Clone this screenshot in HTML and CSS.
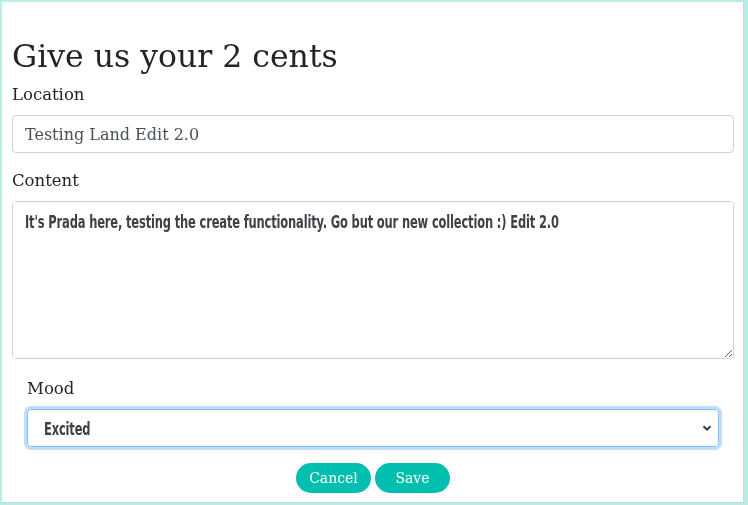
FILE: index.html
```html
<!DOCTYPE html>
<html>
<head>
<meta charset="utf-8">
<link rel="stylesheet" href="styles.css">
</head>
<body>
<div class="card">
  <h1 class="title">Give us your 2 cents</h1>
  <form class="form">
    <div class="group">
      <label class="label">Location</label>
      <input class="control serif" type="text" value="Testing Land Edit 2.0">
    </div>
    <div class="group">
      <label class="label">Content</label>
      <div class="control area" role="textbox" aria-multiline="true"><span class="narrow">It's Prada here, testing the create functionality. Go but our new collection :) Edit 2.0</span></div>
    </div>
    <div class="group inset">
      <label class="label">Mood</label>
      <div class="select focus">
        <span class="narrow sel">Excited</span>
        <svg class="chev" width="10" height="8" viewBox="0 0 10 8"><path d="M1.5 2.2 L5 5.6 L8.5 2.2" fill="none" stroke="#343a40" stroke-width="2"/></svg>
      </div>
    </div>
    <div class="actions">
      <button type="button" class="btn">Cancel</button>
      <button type="button" class="btn">Save</button>
    </div>
  </form>
</div>
</body>
</html>
```
FILE: styles.css
```css
html, body {
  margin: 0;
  padding: 0;
}
body {
  background: #b8ede7;
  width: 748px;
  height: 505px;
  box-sizing: border-box;
  padding: 2px 4px 2px 2px;
  font-family: "DejaVu Serif", "Liberation Serif", serif;
  color: #212529;
}
.card {
  background: #fff;
  height: 100%;
  box-sizing: border-box;
  border-right: 1px solid #cfd4d8;
  border-bottom: 1px solid #cfd4d8;
  padding: 35px 9px 0 10px;
}
.title {
  font-size: 31.5px;
  font-weight: 400;
  line-height: 38px;
  margin: 0 0 8px 0;
}
.form {
  margin: 0;
}
.group {
  margin-bottom: 16px;
}
.inset {
  padding: 0 15px;
  margin-bottom: 16px;
}
.label {
  display: block;
  font-size: 16.5px;
  line-height: 24px;
  margin-bottom: 8px;
}
.inset .label {
  padding-top: 2px;
}
.control {
  display: block;
  width: 100%;
  box-sizing: border-box;
  border: 1px solid #ced4da;
  border-radius: 4px;
  background: #fff;
  color: #495057;
  padding: 6px 12px;
  margin: 0;
}
.serif {
  height: 38px;
  font-family: "DejaVu Serif", "Liberation Serif", serif;
  font-size: 16px;
}
.area {
  margin-top: 2px;
  height: 158px;
  resize: vertical;
  overflow: auto;
  padding-top: 8px;
  line-height: 24px;
}
.narrow {
  display: inline-block;
  font-family: "DejaVu Sans Condensed", "DejaVu Sans", sans-serif;
  font-weight: 700;
  font-size: 17px;
  color: #3d4247;
  white-space: nowrap;
  transform: scaleX(0.75);
  transform-origin: left center;
  letter-spacing: -0.2px;
}
.select {
  height: 38px;
  box-sizing: border-box;
  border: 1px solid #80bdff;
  border-radius: 4px;
  box-shadow: 0 0 0 3px rgba(0, 123, 255, 0.25);
  display: flex;
  align-items: center;
  justify-content: space-between;
  padding: 0 6px 0 16px;
}
.sel {
  padding-top: 2px;
}
.actions {
  display: flex;
  justify-content: center;
  gap: 4px;
}
.btn {
  width: 75px;
  height: 30px;
  border: none;
  border-radius: 15px;
  background: #00bfae;
  color: #fff;
  font-family: "DejaVu Serif", "Liberation Serif", serif;
  font-size: 14px;
  padding: 0;
}
```
